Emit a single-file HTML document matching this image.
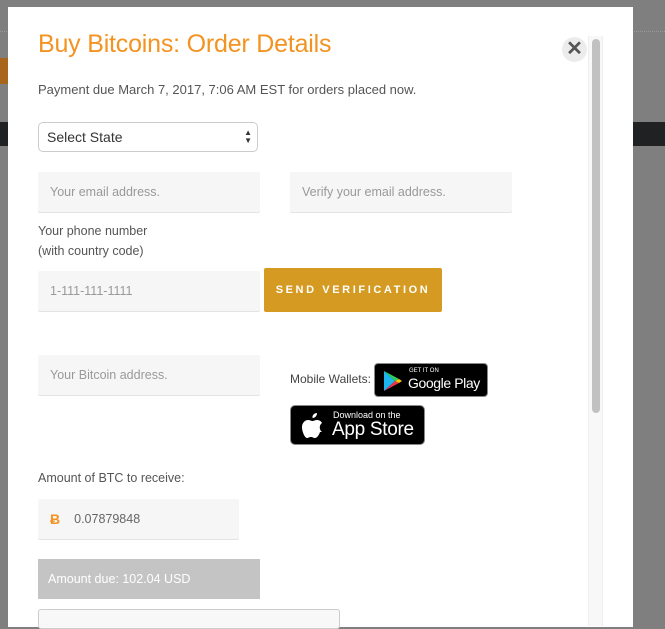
<!DOCTYPE html>
<html><head><meta charset="utf-8"><style>
*{box-sizing:border-box;margin:0;padding:0}
body{width:665px;height:622px;overflow:hidden;background:#7f7f7f;position:relative;font-family:"Liberation Sans",sans-serif}
.a{position:absolute;white-space:nowrap}
.modal{left:8px;top:7px;width:625px;height:620px;background:#fff}
.inp{position:absolute;background:#f6f6f6;border-radius:2px;box-shadow:0 1px 0 #e3e3e3;color:#999;font-size:12.5px;padding-left:12px;display:flex;align-items:center}
.txt{position:absolute;color:#555;font-size:12.5px;white-space:nowrap}
</style></head><body>
<div class="a" style="left:0;top:31px;width:665px;border-top:1px dotted #999"></div>
<div class="a" style="left:0;top:122px;width:665px;height:24px;background:#202122"></div>
<div class="a" style="left:0;top:58px;width:8px;height:26px;background:#a8661c"></div>
<div class="a modal"></div>
<div class="a" style="left:38px;top:30px;font-size:25px;color:#f39321;letter-spacing:-0.2px">Buy Bitcoins: Order Details</div>
<div class="a" style="left:562px;top:37px;width:25px;height:25px;border-radius:50%;background:#ececec;color:#555;font-size:20px;font-weight:bold;text-align:center;line-height:24px">✕</div>
<div class="a" style="left:588px;top:36px;width:15px;height:590px;background:#f8f8f8;border-left:1px solid #eee;border-right:1px solid #eee"></div>
<div class="a" style="left:592px;top:39px;width:8px;height:374px;border-radius:4px;background:#c1c1c1"></div>
<div class="txt" style="left:38px;top:82px;font-size:13px">Payment due March 7, 2017, 7:06 AM EST for orders placed now.</div>
<div class="a" style="left:38px;top:122px;width:220px;height:30px;border:1px solid #ccc;border-radius:5px;font-size:14px;color:#333;padding:6px 8px">Select State<span style="position:absolute;right:5px;top:6px;font-size:8px;line-height:8px">▲<br>▼</span></div>
<div class="inp" style="left:38px;top:172px;width:222px;height:40px">Your email address.</div>
<div class="inp" style="left:290px;top:172px;width:222px;height:40px">Verify your email address.</div>
<div class="txt" style="left:38px;top:221px;line-height:20px">Your phone number<br>(with country code)</div>
<div class="inp" style="left:38px;top:271px;width:222px;height:40px">1-111-111-1111</div>
<div class="a" style="left:264px;top:268px;width:178px;height:44px;background:#d59a21;border-radius:2px;color:#fff;font-size:11px;font-weight:bold;letter-spacing:2.6px;text-align:center;line-height:44px">SEND VERIFICATION</div>
<div class="inp" style="left:38px;top:355px;width:222px;height:40px">Your Bitcoin address.</div>
<div class="txt" style="left:290px;top:372px;font-size:12px;color:#444">Mobile Wallets:</div>
<div class="a" style="left:374px;top:363px;width:114px;height:34px;background:#000;border-radius:4px;border:1px solid #888;color:#fff">
<svg class="a" style="left:8px;top:6px" width="20" height="22" viewBox="0 0 20 22"><path d="M1 1L12 11L1 21Z" fill="#1cb5f0"/><path d="M1 1L16 9L12 11Z" fill="#30d158"/><path d="M1 21L16 13L12 11Z" fill="#e8334a"/><path d="M16 9L19 11L16 13L12 11Z" fill="#ffc107"/></svg>
<div class="a" style="left:34px;top:4px;font-size:6px">GET IT ON</div>
<div class="a" style="left:33px;top:11px;font-size:14px;letter-spacing:-0.4px">Google Play</div></div>
<div class="a" style="left:290px;top:405px;width:135px;height:40px;background:#000;border-radius:5px;border:1px solid #888;color:#fff">
<svg class="a" style="left:11px;top:7px" width="22" height="26" viewBox="0 0 22 26"><path d="M15 0c0 3-2 5-4.5 5C10 2 12.5 0 15 0Z M18 19c-1 3-3 6-5 6-2 0-2-1-4-1s-2.5 1-4 1C3 25 0 19 0 14c0-4 3-7 6-7 2 0 3 1 4.5 1S13 7 15 7c2 0 4 1 5 3-3 2-3 7 0 9Z" fill="#fff"/></svg>
<div class="a" style="left:42px;top:4px;font-size:9px">Download on the</div>
<div class="a" style="left:41px;top:13px;font-size:19px;letter-spacing:-0.3px">App Store</div></div>
<div class="txt" style="left:38px;top:471px">Amount of BTC to receive:</div>
<div class="inp" style="left:38px;top:499px;width:201px;height:40px;color:#666"><span style="color:#f39321;font-weight:bold;font-size:14px;margin-right:14px">Ƀ</span>0.07879848</div>
<div class="a" style="left:38px;top:559px;width:222px;height:40px;background:#c4c4c4;color:#fff;font-size:12.5px;padding-left:10px;line-height:40px">Amount due: 102.04 USD</div>
<div class="a" style="left:38px;top:609px;width:302px;height:20px;border:1px solid #ccc;border-radius:3px;background:#f8f8f8"></div>
</body></html>
